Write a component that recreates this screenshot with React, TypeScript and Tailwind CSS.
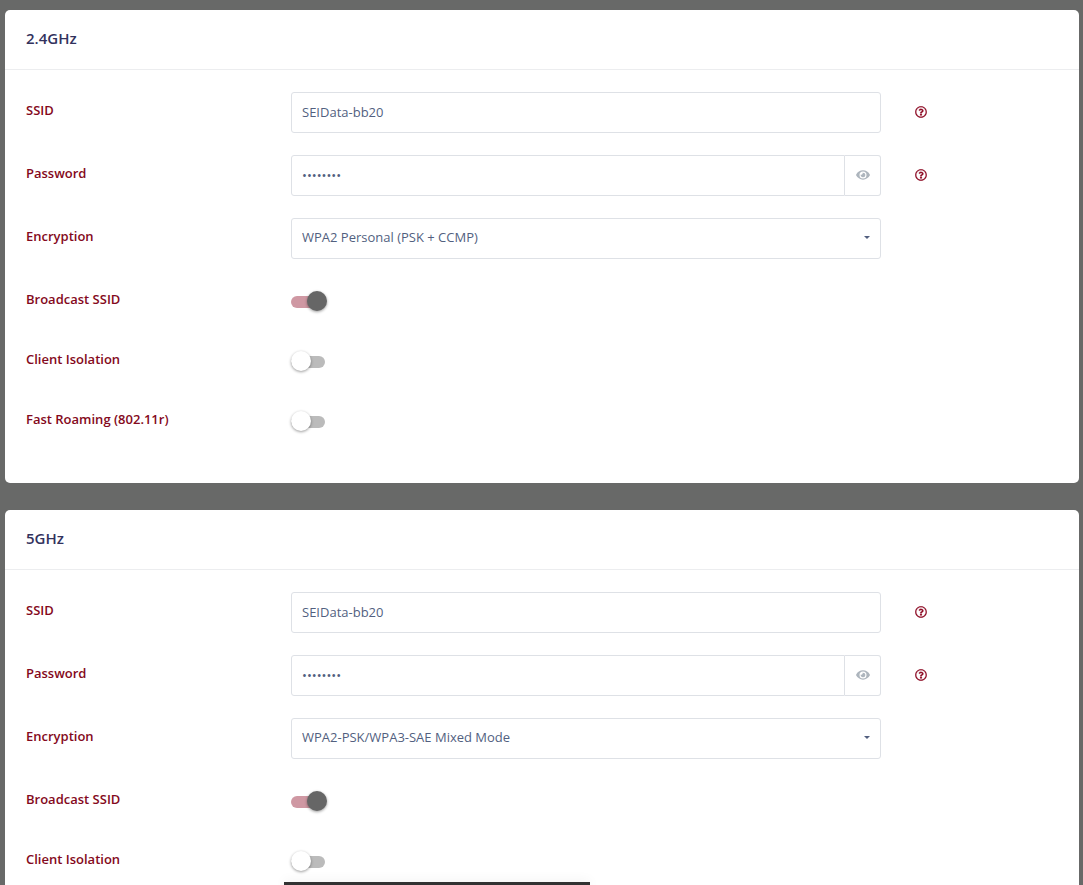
import { useId, useState } from "react";
import { FaEye, FaRegQuestionCircle } from "react-icons/fa";

const ENCRYPTION_OPTIONS = [
  "WPA2 Personal (PSK + CCMP)",
  "WPA2-PSK/WPA3-SAE Mixed Mode",
  "WPA3-SAE",
  "None",
];

const controlClass =
  "h-[41px] w-full min-w-0 rounded-[3px] border border-[#dee1e6] bg-white px-2.5 pb-0.5 text-[13px] text-[#525f7f] outline-none";

type RowProps = {
  id: string;
  label: string;
  help?: boolean;
  children: React.ReactNode;
};

function Row({ id, label, help, children }: RowProps) {
  return (
    <div className="grid grid-cols-12 items-start gap-7">
      <label htmlFor={id} className="col-span-3 pt-2 text-[13px] leading-5 font-semibold text-[#840920]">
        {label}
      </label>
      <div className="col-span-7">{children}</div>
      {help && (
        <div className="col-span-2 flex h-10 items-center px-1.5">
          <button type="button" aria-label={`${label} help`} className="text-[#8f0c25]">
            <FaRegQuestionCircle className="size-3" stroke="currentColor" strokeWidth={8} />
          </button>
        </div>
      )}
    </div>
  );
}

function ToggleRow({ label, defaultChecked = false }: { label: string; defaultChecked?: boolean }) {
  const id = useId();
  return (
    <Row id={id} label={label}>
      <div className="flex h-[38px] items-center pt-1">
        <input
          id={id}
          type="checkbox"
          defaultChecked={defaultChecked}
          className="relative h-3 w-[34px] appearance-none rounded-full bg-[#bbbbbb] before:absolute before:-top-[5px] before:left-0 before:size-5 before:rounded-full before:bg-white before:shadow-[0_1px_3px_rgba(0,0,0,0.4)] checked:bg-[#cf98a3] checked:before:left-4 checked:before:bg-[#666666]"
        />
      </div>
    </Row>
  );
}

type RadioCardProps = {
  band: string;
  encryption: string;
  fastRoaming?: boolean;
};

function RadioCard({ band, encryption, fastRoaming }: RadioCardProps) {
  const id = useId();
  const [visible, setVisible] = useState(false);

  return (
    <section className="rounded-[5px] bg-white">
      <div className="border-b border-[#ecedef] px-[21px] pt-4 pb-[18px]">
        <h2 className="text-[15px] leading-[25px] font-semibold text-[#32325d]">{band}</h2>
      </div>
      <form className="flex flex-col gap-[22px] px-[21px] pt-[22px] pb-11">
        <Row id={`${id}-ssid`} label="SSID" help>
          <input id={`${id}-ssid`} type="text" defaultValue="SEIData-bb20" className={`${controlClass} block`} />
        </Row>
        <Row id={`${id}-password`} label="Password" help>
          <div className="flex">
            <input
              id={`${id}-password`}
              type={visible ? "text" : "password"}
              defaultValue="password"
              className={`${controlClass} rounded-r-none`}
            />
            <button
              type="button"
              aria-label="Show password"
              onClick={() => setVisible(!visible)}
              className="flex w-9 shrink-0 items-center justify-center rounded-r-[3px] border border-l-0 border-[#dee1e6] pb-0.5 text-[#adb5bd]"
            >
              <FaEye className="size-3.5" />
            </button>
          </div>
        </Row>
        <Row id={`${id}-encryption`} label="Encryption">
          <div className="relative">
            <select
              id={`${id}-encryption`}
              defaultValue={encryption}
              className={`${controlClass} block appearance-none`}
            >
              {ENCRYPTION_OPTIONS.map((option) => (
                <option key={option}>{option}</option>
              ))}
            </select>
            <span className="pointer-events-none absolute top-[18px] right-[11px] border-x-3 border-t-3 border-x-transparent border-t-[#525f7f]" />
          </div>
        </Row>
        <ToggleRow label="Broadcast SSID" defaultChecked />
        <ToggleRow label="Client Isolation" />
        {fastRoaming && <ToggleRow label="Fast Roaming (802.11r)" />}
      </form>
    </section>
  );
}

export default function App() {
  return (
    <div className="h-screen overflow-hidden bg-[#686968] font-['Open_Sans',sans-serif]">
      <main className="flex flex-col gap-[27px] pt-2.5 pr-1 pl-[5px]">
        <RadioCard band="2.4GHz" encryption="WPA2 Personal (PSK + CCMP)" fastRoaming />
        <RadioCard band="5GHz" encryption="WPA2-PSK/WPA3-SAE Mixed Mode" />
      </main>
      {/* top edge of the notification bar */}
      <div className="fixed bottom-0 left-[284px] h-[3px] w-[306px] bg-[#323232] shadow-[0_0_12px_rgba(0,0,0,0.12)]" />
    </div>
  );
}
